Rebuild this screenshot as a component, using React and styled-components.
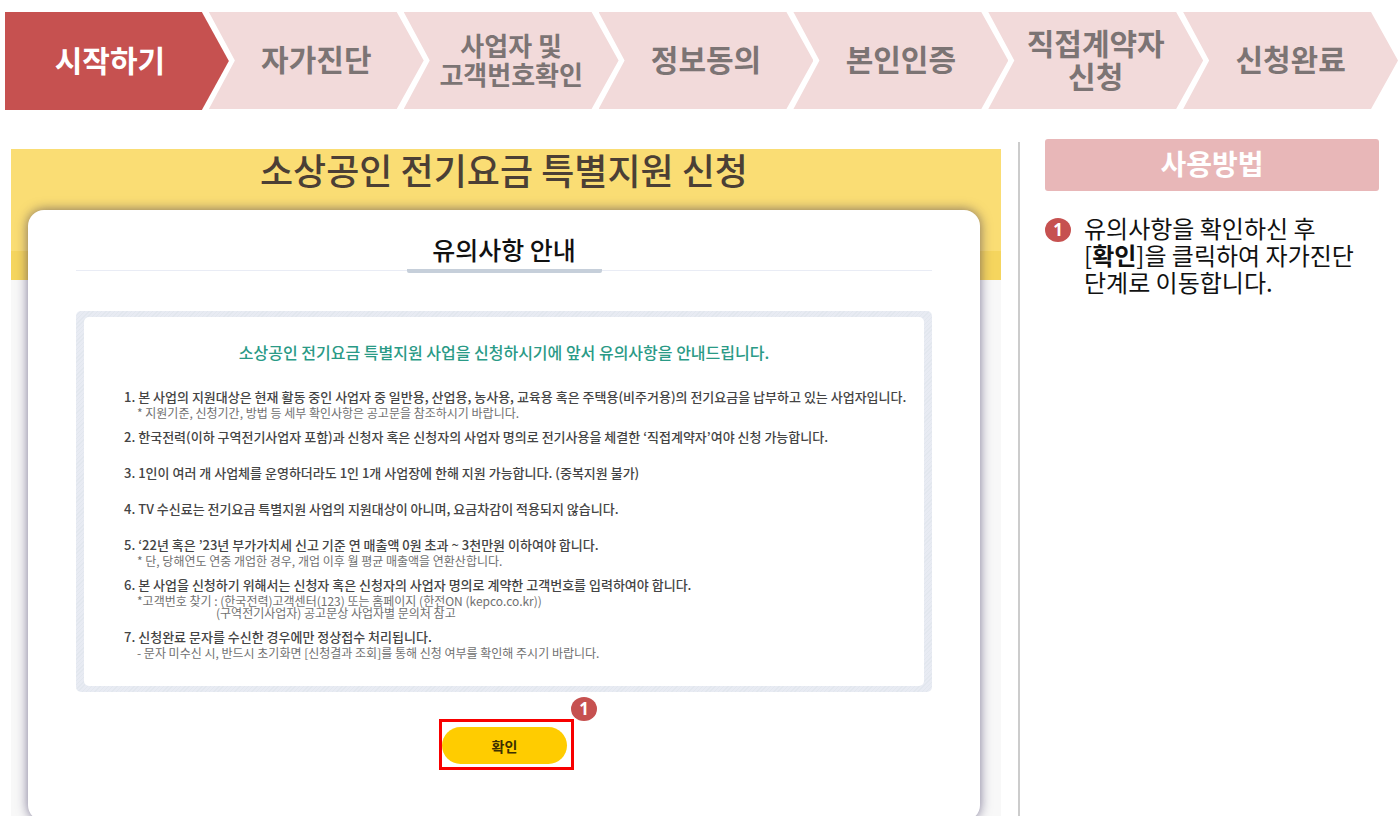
import React from 'react'
import styled, { createGlobalStyle } from 'styled-components'

const GlobalStyle = createGlobalStyle`
  * {
    box-sizing: border-box;
  }
  body {
    margin: 0;
    background: #fff;
    font-family: 'Noto Sans CJK KR', 'Noto Sans', sans-serif;
    word-break: keep-all;
  }
`

const Page = styled.div`
  display: flex;
  flex-direction: column;
  min-height: 100vh;
`

const Steps = styled.ol`
  display: flex;
  margin: 0;
  padding: 12px 0 0 5px;
  list-style: none;
`

const Step = styled.li`
  display: flex;
  flex: ${props => props.$active ? 210 : 215} 1 0;
  align-items: center;
  justify-content: center;
  height: ${props => props.$active ? '98px' : '97px'};
  margin-left: ${props => props.$active ? '0' : '-20px'};
  padding: 0 ${props => props.$active ? '14px' : '0'} 4px 0;
  background: ${props => props.$active ? '#c65150' : '#f2dada'};
  clip-path: ${props => props.$active
    ? 'polygon(0 0, calc(100% - 27px) 0, 100% 50%, calc(100% - 27px) 100%, 0 100%)'
    : 'polygon(0 0, calc(100% - 27px) 0, 100% 50%, calc(100% - 27px) 100%, 0 100%, 26px 50%)'};
  color: ${props => props.$active ? '#fff' : '#7c7474'};
  font-size: ${props => props.$small ? '26px' : '30px'};
  font-weight: 700;
  line-height: ${props => props.$small ? '29px' : '33px'};
  text-align: center;
  white-space: pre-line;
`

const Main = styled.main`
  display: flex;
  flex: 1;
  align-items: stretch;
  padding: 32px 19px 0 11px;
`

const Screen = styled.section`
  flex: 1;
  min-width: 0;
  margin: 7px 17px 0 0;
  padding: 0 21px 0 17px;
  background: linear-gradient(#fadd74 0 102px, #f5d55e 102px 131px, #f8f8f8 131px);
`

const ScreenTitle = styled.h1`
  margin: 0;
  padding-bottom: 21px;
  color: #4b3f35;
  font-size: 36px;
  font-weight: 500;
  line-height: 40px;
  text-align: center;
`

const Card = styled.div`
  display: flex;
  flex-direction: column;
  align-items: center;
  padding: 20px 48px 51px;
  border-radius: 16px;
  background: #fff;
  box-shadow: 0 0 12px rgba(40, 30, 80, 0.6);
`

const CardHeading = styled.div`
  display: flex;
  justify-content: center;
  align-self: stretch;
  border-bottom: 1px solid #e9ecf5;
`

const CardTitle = styled.h2`
  width: 195px;
  margin: 0 0 -3px;
  padding-bottom: 1px;
  border-bottom: 4px solid #c6cfda;
  border-radius: 2px;
  color: #111;
  font-size: 25px;
  font-weight: 500;
  line-height: 38px;
  text-align: center;
`

const Notice = styled.div`
  align-self: stretch;
  margin-top: 40px;
  padding: 6px 8px;
  border-radius: 5px;
  background: repeating-linear-gradient(135deg, #e2e7ee 0 1px, #e8ebf3 1px 3px);
`

const NoticeBody = styled.div`
  padding: 22px 40px 27px;
  border-radius: 5px;
  background: #fff;
`

const Lead = styled.p`
  margin: 0 0 22px;
  color: #2a9a86;
  font-size: 16px;
  font-weight: 500;
  line-height: 26px;
  text-align: center;
`

const Rules = styled.ol`
  display: flex;
  flex-direction: column;
  gap: 8px;
  margin: 0;
  padding: 0;
  list-style: none;
`

const Rule = styled.li`
  min-height: 28px;
  color: #444;
  font-size: 13px;
  font-weight: 500;
  line-height: 20px;
  white-space: nowrap;
`

const Note = styled.p`
  margin: 0;
  padding-left: ${props => props.$deep ? '92px' : '13px'};
  color: #707070;
  font-size: 12px;
  font-weight: 400;
  line-height: 12px;
`

const Target = styled.div`
  position: relative;
  margin: 27px 0 0 5px;
  padding: 5px 4px 3px 0;
  border: 3px solid #f80000;
`

const Confirm = styled.button`
  display: block;
  width: 125px;
  height: 37px;
  border: none;
  border-radius: 19px;
  background: #ffcc00;
  color: #3b2f00;
  font-family: inherit;
  font-size: 14px;
  font-weight: 700;
  cursor: pointer;
`

const Badge = styled.span`
  display: flex;
  flex: none;
  align-items: center;
  justify-content: center;
  width: 26px;
  height: 24px;
  border-radius: 50%;
  background: #c65150;
  color: #fff;
  font-family: 'Noto Sans', sans-serif;
  font-size: 17px;
  font-weight: 700;
  line-height: 24px;
`

const TargetBadge = styled(Badge)`
  position: absolute;
  top: -25px;
  right: -26px;
`

const Guide = styled.aside`
  flex: 0 0 361px;
  padding-left: 25px;
  border-left: 2px solid #ccc;
`

const GuideTitle = styled.h2`
  margin: -3px 0 0;
  padding-bottom: 4px;
  border-radius: 3px;
  background: #e8b7b8;
  color: #fff;
  font-size: 28px;
  font-weight: 700;
  line-height: 48px;
  text-align: center;
`

const GuideItem = styled.div`
  display: flex;
  gap: 13px;
  padding-top: 27px;
`

const GuideText = styled.p`
  margin: -4px 0 0;
  color: #111;
  font-size: 24px;
  line-height: 27px;
`

const steps = [
  { label: '시작하기', active: true },
  { label: '자가진단' },
  { label: '사업자 및\n고객번호확인', small: true },
  { label: '정보동의' },
  { label: '본인인증' },
  { label: '직접계약자\n신청' },
  { label: '신청완료' }
]

const rules = [
  {
    text: '1. 본 사업의 지원대상은 현재 활동 중인 사업자 중 일반용, 산업용, 농사용, 교육용 혹은 주택용(비주거용)의 전기요금을 납부하고 있는 사업자입니다.',
    notes: ['* 지원기준, 신청기간, 방법 등 세부 확인사항은 공고문을 참조하시기 바랍니다.']
  },
  { text: '2. 한국전력(이하 구역전기사업자 포함)과 신청자 혹은 신청자의 사업자 명의로 전기사용을 체결한 ‘직접계약자’여야 신청 가능합니다.' },
  { text: '3. 1인이 여러 개 사업체를 운영하더라도 1인 1개 사업장에 한해 지원 가능합니다. (중복지원 불가)' },
  { text: '4. TV 수신료는 전기요금 특별지원 사업의 지원대상이 아니며, 요금차감이 적용되지 않습니다.' },
  {
    text: '5. ‘22년 혹은 ’23년 부가가치세 신고 기준 연 매출액 0원 초과 ~ 3천만원 이하여야 합니다.',
    notes: ['* 단, 당해연도 연중 개업한 경우, 개업 이후 월 평균 매출액을 연환산합니다.']
  },
  {
    text: '6. 본 사업을 신청하기 위해서는 신청자 혹은 신청자의 사업자 명의로 계약한 고객번호를 입력하여야 합니다.',
    notes: ['*고객번호 찾기 : (한국전력)고객센터(123) 또는 홈페이지 (한전ON (kepco.co.kr))'],
    deep: '(구역전기사업자) 공고문상 사업자별 문의처 참고'
  },
  {
    text: '7. 신청완료 문자를 수신한 경우에만 정상접수 처리됩니다.',
    notes: ['- 문자 미수신 시, 반드시 초기화면 [신청결과 조회]를 통해 신청 여부를 확인해 주시기 바랍니다.']
  }
]

const StepBar = () => (
  <Steps>
    {steps.map(s => <Step key={s.label} $active={s.active} $small={s.small}>{s.label}</Step>)}
  </Steps>
)

const RuleItem = ({ text, notes = [], deep }) => (
  <Rule>
    {text}
    {notes.map(n => <Note key={n}>{n}</Note>)}
    {deep && <Note $deep>{deep}</Note>}
  </Rule>
)

const App = () => (
  <Page>
    <GlobalStyle />
    <StepBar />
    <Main>
      <Screen>
        <ScreenTitle>소상공인 전기요금 특별지원 신청</ScreenTitle>
        <Card>
          <CardHeading>
            <CardTitle>유의사항 안내</CardTitle>
          </CardHeading>
          <Notice>
            <NoticeBody>
              <Lead>소상공인 전기요금 특별지원 사업을 신청하시기에 앞서 유의사항을 안내드립니다.</Lead>
              <Rules>
                {rules.map(r => <RuleItem key={r.text} {...r} />)}
              </Rules>
            </NoticeBody>
          </Notice>
          <Target>
            <Confirm type="button">확인</Confirm>
            <TargetBadge>1</TargetBadge>
          </Target>
        </Card>
      </Screen>
      <Guide>
        <GuideTitle>사용방법</GuideTitle>
        <GuideItem>
          <Badge>1</Badge>
          <GuideText>
            유의사항을 확인하신 후<br />
            [<b>확인</b>]을 클릭하여 자가진단<br />
            단계로 이동합니다.
          </GuideText>
        </GuideItem>
      </Guide>
    </Main>
  </Page>
)

export default App
